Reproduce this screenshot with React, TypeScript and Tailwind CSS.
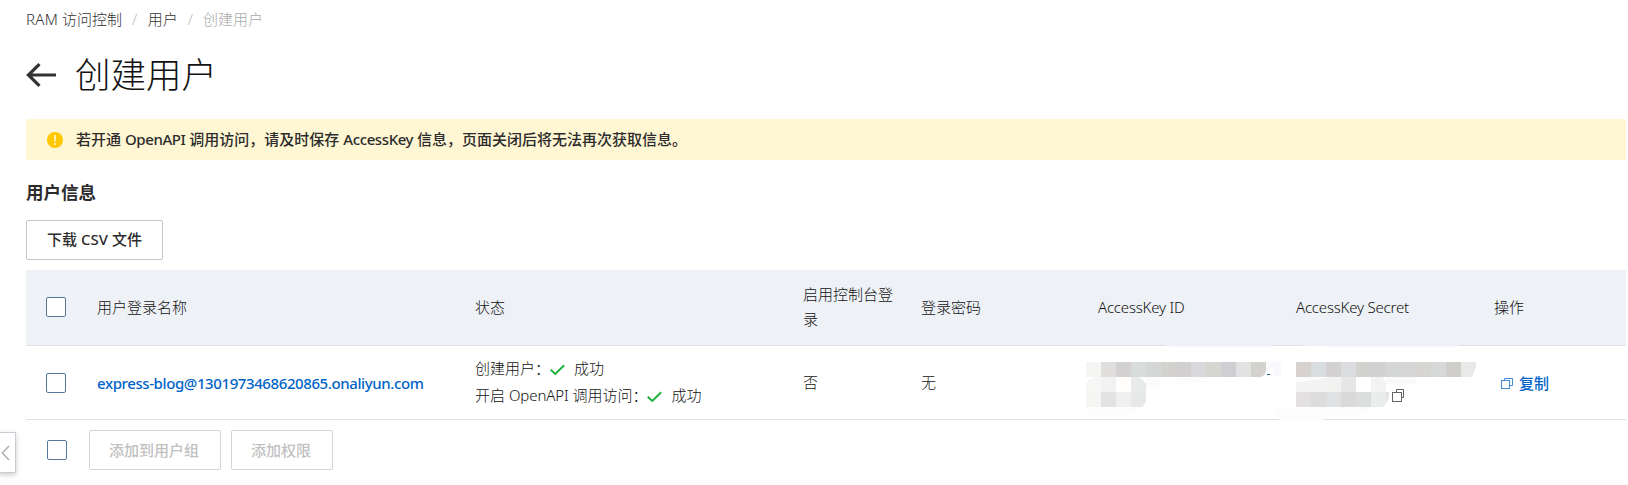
import type { ReactNode } from "react";

function Latin({ children, className = "" }: { children: ReactNode; className?: string }) {
  return <span className={`whitespace-nowrap ${className}`}>{children}</span>;
}

function Checkbox() {
  return <span className="block size-5 shrink-0 rounded-[2px] border border-[#557799] bg-white" />;
}

function Check() {
  return (
    <svg className="mr-[9px] mt-[3px] h-[12px] w-[15px] shrink-0" viewBox="0 0 15 12" fill="none">
      <path d="M0.7 5.7 L5.3 10 L14.2 1.2" stroke="#1bb038" strokeWidth="1.9" />
    </svg>
  );
}

function CopyIcon({ color, className }: { color: string; className: string }) {
  return (
    <svg className={className} viewBox="0 0 13 13" fill="none" stroke={color}>
      <path d="M4.5 3 V1.5 H12.5 V8.5 H10" />
      <rect x="1.5" y="3.5" width="8" height="8" />
    </svg>
  );
}

type Tile = [number, number, string];

const idTiles: Tile[] = [
  [0, 0, "#f5f5f3"], [1, 0, "#e0dfdd"], [2, 0, "#d4d1d3"], [3, 0, "#d8dcdb"], [4, 0, "#d4d7d6"],
  [5, 0, "#d4d2cf"], [6, 0, "#d2cfd1"], [7, 0, "#d9d9dd"], [8, 0, "#d5d6d0"], [9, 0, "#cfced2"],
  [10, 0, "#e2e2e2"], [11, 0, "#d3d2ce"],
  [0, 1, "#f6f6f5"], [1, 1, "#f2f2f2"], [2, 1, "#fffefc"], [3, 1, "#e9eaea"],
  [0, 2, "#f5f5f4"], [1, 2, "#e3e3e3"], [2, 2, "#f0f0f0"], [3, 2, "#e7e9e8"],
];

const secretTiles: Tile[] = [
  [0, 0, "#d7d2ce"], [1, 0, "#d8dde0"], [2, 0, "#d4d1d3"], [3, 0, "#dcdde0"], [4, 0, "#d2d2ce"],
  [5, 0, "#d2d2d2"], [6, 0, "#d4d7d6"], [7, 0, "#d6d6d6"], [8, 0, "#d6d5d1"], [9, 0, "#d6d9d8"],
  [10, 0, "#cfcecb"], [11, 0, "#e9e9e9"],
  [0, 1, "#f4f4f4"], [1, 1, "#f3f3f3"], [2, 1, "#f2f2f0"], [3, 1, "#e6e6e6"], [5, 1, "#f3f3f3"],
  [0, 2, "#e2e0e1"], [1, 2, "#dcdcdc"], [2, 2, "#e0e1e2"], [3, 2, "#d9d9d9"], [4, 2, "#dcdedd"],
  [5, 2, "#eaedec"], [6, 2, "#e5e1df"],
];

function Tiles({ tiles }: { tiles: Tile[] }) {
  return (
    <>
      {tiles.map(([c, r, fill]) => (
        <rect key={`${c}-${r}`} x={c * 15} y={r * 15} width="15" height="15" fill={fill} shapeRendering="crispEdges" />
      ))}
    </>
  );
}

function IdMosaic() {
  return (
    <svg className="-ml-3 mt-4 h-[45px] w-[195px] overflow-visible" viewBox="0 0 195 45">
      <path d="M74 -17.5 Q80 -16 86 -15.5 H186 V-17.5 Z" fill="#eef2f7" />
      <path d="M0 45 H58 L50 51 Q20 58 6 53 Q-2 49 -2 45Z" fill="#fdfdfd" />
      <path d="M60 15 H75 V26 H60Z M90 15 H120 V20 L90 22Z" fill="#fcfcfc" />
      <path d="M188 45 H203 V60 Q190 54 188 45Z" fill="#fdfdfd" />
      <clipPath id="id-shape">
        <path d="M0 0 H180 V9 Q178 15 174 15 H60 V40 L56 45 H0Z" />
      </clipPath>
      <g clipPath="url(#id-shape)"><Tiles tiles={idTiles} /></g>
      <path d="M0 15 H9 Q2 17 0 22Z M60 15 V22 Q57 17 52 15Z" fill="#fff" />
      <path d="M187 0 H195 V15 H190 Q186 12 187 0Z M180 0 H187 Q187 7 180 10Z" fill="#f7f9fc" />
      <rect x="181" y="12" width="3" height="1" fill="#185d83" />
    </svg>
  );
}

function SecretMosaic() {
  return (
    <svg className="mt-4 h-[45px] w-[195px] overflow-visible" viewBox="0 0 195 45">
      <path d="M-5 -17.5 Q20 -15.5 50 -15.5 H160 L167 -17.5Z" fill="#eef2f7" />
      <path d="M-22 45 H82 Q70 52 50 53 L20 59 Q-8 62 -18 57Z" fill="#fdfdfd" />
      <rect x="90" y="15" width="30" height="7" fill="#fafafa" />
      <clipPath id="secret-shape">
        <path d="M0 0 H180 V5 L176 15 H86 Q93 22 93 31 Q93 39 87 45 H0 V20 L36 15 H0Z" />
      </clipPath>
      <g clipPath="url(#secret-shape)"><Tiles tiles={secretTiles} /></g>
      <path d="M0 20 L36 15 H0Z" fill="#fcfcfc" />
      <g transform="translate(95 26)" stroke="#606266" fill="none">
        <path d="M5.5 4 V1.5 H12.5 V9.5 H11" />
        <rect x="1.5" y="4.5" width="9" height="9" fill="#fff" />
      </g>
    </svg>
  );
}

const columns =
  "grid w-[1600px] grid-cols-[71px_378px_328px_118px_177px_198px_198px_132px]";

export default function App() {
  return (
    <div className="relative flex h-[485px] w-[1628px] flex-col overflow-hidden bg-white pl-[26px] font-['Noto_Sans','Noto_Sans_CJK_SC',sans-serif] text-[15px] text-[#2c2c2c]">
      <nav className="flex h-[39px] items-center font-light text-[#333]">
        <span><Latin className="tracking-[0.3px]">RAM</Latin> 访问控制</span>
        <span className="mx-[10px] text-[#bbb]">/</span>
        <span className="ml-[0.5px]">用户</span>
        <span className="mx-[10px] text-[#bbb]">/</span>
        <span className="text-[#aaa]">创建用户</span>
      </nav>

      <header className="flex h-20 items-center pb-2">
        <svg className="h-6 w-[30px]" viewBox="0 0 30 24" fill="none" stroke="#333" strokeWidth="3.2">
          <path d="M30 12 H3 M13.5 1.2 L2.4 12 L13.5 22.8" />
        </svg>
        <h1 className="ml-[19px] text-[35.5px] leading-none font-light text-[#111]">创建用户</h1>
      </header>

      <div className="flex h-[41px] w-[1600px] shrink-0 items-center rounded-l-[2px] bg-[#fff6d3] font-medium">
        <svg className="ml-[21px] size-4" viewBox="0 0 16 16">
          <circle cx="8" cy="8" r="8" fill="#ffc800" />
          <path d="M7 3.2 H9 L8.7 9.5 H7.3Z M7.1 11 H8.9 V12.8 H7.1Z" fill="#fff5d1" />
        </svg>
        <p className="ml-[13px] whitespace-nowrap">
          若开通 <Latin className="tracking-[-0.4px]">OpenAPI</Latin> 调用访问，请及时保存{" "}
          <Latin className="tracking-[-0.4px]">AccessKey</Latin> 信息，页面关闭后将无法再次获取信息。
        </p>
      </div>

      <h2 className="mt-[19px] h-[27px] text-[17.5px] leading-[26px] font-bold">用户信息</h2>

      <button className="mt-[14px] h-10 w-[137px] shrink-0 rounded-[2px] border border-[#c0c6cc] pb-[2px] font-medium whitespace-nowrap">
        下载 <Latin>CSV</Latin> 文件
      </button>

      <div className="mt-[10px]">
        <div className={`${columns} h-[76px] items-center border-b border-[#dee1e6] bg-[#eef2f7] font-light leading-[25px] text-[#111]`}>
          <div className="pl-5 pb-[1px]"><Checkbox /></div>
          <div>用户登录名称</div>
          <div>状态</div>
          <div className="w-[92px] pb-[2px]">启用控制台登录</div>
          <div>登录密码</div>
          <div><Latin className="tracking-[-0.2px]">AccessKey ID</Latin></div>
          <div><Latin className="tracking-[-0.2px]">AccessKey Secret</Latin></div>
          <div>操作</div>
        </div>

        <div className={`${columns} h-[74px] items-center border-b border-[#dee1e6] font-light text-[#111]`}>
          <div className="pl-5"><Checkbox /></div>
          <a className="pt-[1px] whitespace-nowrap font-medium tracking-[-0.4px] text-[#0064c8]">
            express-blog@1301973468620865.onaliyun.com
          </a>
          <div className="pb-[2px] leading-[27px]">
            <div className="flex items-center">创建用户：<Check />成功</div>
            <div className="flex items-center whitespace-pre">
              {"开启 "}<Latin className="tracking-[-0.1px]">OpenAPI</Latin>{" 调用访问："}<Check />成功
            </div>
          </div>
          <div>否</div>
          <div>无</div>
          <div className="self-start"><IdMosaic /></div>
          <div className="self-start"><SecretMosaic /></div>
          <a className="flex items-center pt-[1px] pl-[6px] font-medium text-[#0064c8]">
            <CopyIcon color="#4389d3" className="mr-[6px] size-[13px]" />
            复制
          </a>
        </div>
      </div>

      <footer className="flex h-[60px] items-center pl-[21px] font-medium text-[#c1c1c1]">
        <Checkbox />
        <button className="ml-[22px] h-10 w-[132px] rounded-[2px] border border-[#d1d5d9] pr-[2px]">添加到用户组</button>
        <button className="ml-[10px] h-10 w-[102px] rounded-[2px] border border-[#d1d5d9] pr-[2px]">添加权限</button>
      </footer>

      <div className="absolute top-[432px] left-[-2px] flex h-[41px] w-[18px] items-center border border-[#c8cdd3] bg-white shadow-[0_2px_5px_rgba(0,0,0,0.2)]">
        <svg className="ml-[2px] h-4 w-[9px]" viewBox="0 0 9 16" fill="none" stroke="#b5b5b5" strokeWidth="1.7">
          <path d="M8 1 L1.4 8 L8 15" />
        </svg>
      </div>
    </div>
  );
}
